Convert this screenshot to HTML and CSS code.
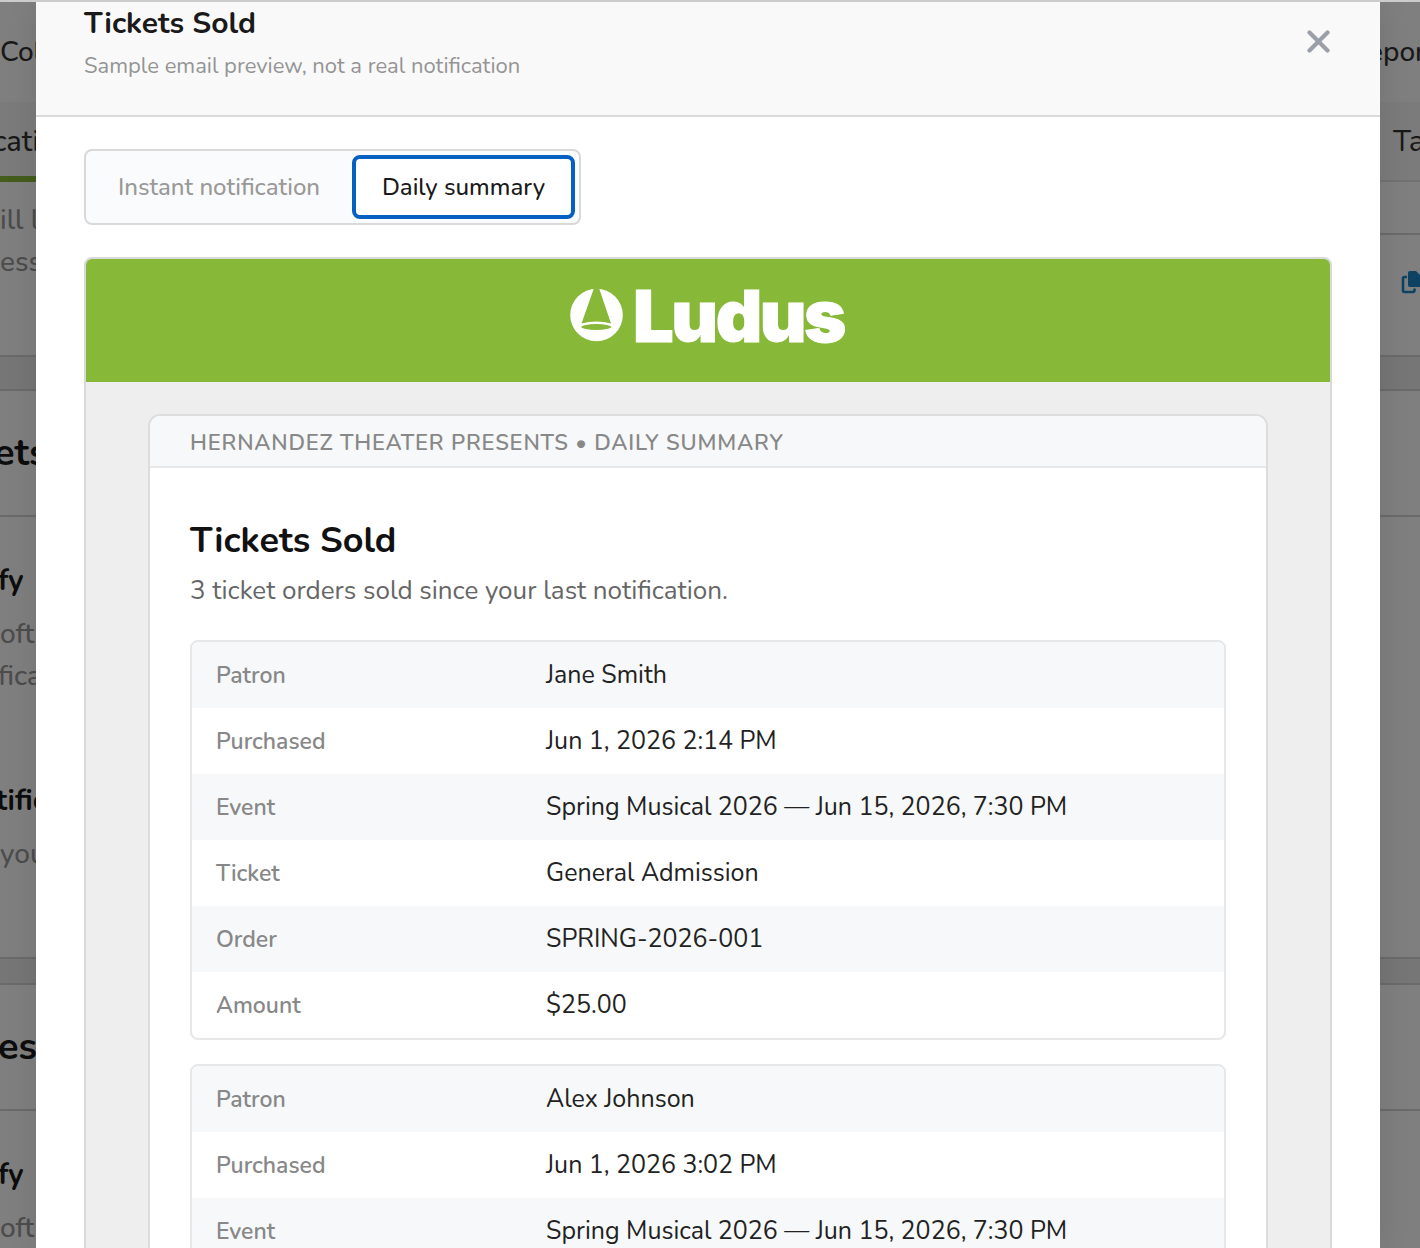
FILE: index.html
```html
<!DOCTYPE html>
<html lang="en">
<head>
  <meta charset="UTF-8">
  <meta name="viewport" content="width=device-width, initial-scale=1.0">
  <title>Tickets Sold - Email Preview</title>
  <link rel="stylesheet" href="styles.css">
</head>
<body>
  <!-- Page behind the modal -->
  <div class="page">
    <div class="nav">
      <span>Col</span>
      <span class="nav-right">epor</span>
    </div>
    <div class="tabs">
      <span class="tab-active">cati</span>
      <span class="tab-right">Ta</span>
    </div>
    <div class="intro">
      <div class="intro-text">
        <p>ill l</p>
        <p>ess</p>
      </div>
      <div class="intro-side">
        <div class="side-top"></div>
        <svg class="copy-icon" width="26" height="24" viewBox="0 0 26 24">
          <path d="M6 6H3.500Q2 6 2 7.500V19.500Q2 21 3.500 21H12Q13.500 21 13.500 19V17.500" fill="none" stroke="#1c84c6" stroke-width="2.600"/>
          <path d="M9 0H15L21 6V14Q21 16 19 16H9Q7 16 7 14V2Q7 0 9 0Z" fill="#1c84c6"/>
        </svg>
      </div>
    </div>
    <div class="card">
      <h2 class="card-title">ets</h2>
      <div class="card-body">
        <h3>fy</h3>
        <p class="indent">oft</p>
        <p>fica</p>
        <h3 class="second">tific</h3>
        <p class="indent">you</p>
      </div>
    </div>
    <div class="card card-next">
      <h2 class="card-title">es</h2>
      <div class="card-body">
        <h3>fy</h3>
        <p class="indent">oft</p>
      </div>
    </div>
  </div>

  <!-- Modal -->
  <div class="overlay">
    <div class="modal">
      <div class="modal-header">
        <div>
          <h1>Tickets Sold</h1>
          <p>Sample email preview, not a real notification</p>
        </div>
        <button class="close" aria-label="Close">
          <svg width="24" height="24" viewBox="0 0 24 24">
            <path d="M2.500 2.500L20.500 20.500M20.500 2.500L2.500 20.500" stroke="#9b9fa8" stroke-width="4.200" stroke-linecap="round"/>
          </svg>
        </button>
      </div>

      <div class="modal-body">
        <div class="toggle">
          <button class="toggle-btn">Instant notification</button>
          <button class="toggle-btn active">Daily summary</button>
        </div>

        <div class="email">
          <div class="email-banner">
            <svg width="280" height="64" viewBox="0 0 280 64">
              <circle cx="28.500" cy="31" r="26.300" fill="#fff"/>
              <path d="M26 4H31L43 39.500Q28.500 35.500 13.500 39.500Z" fill="#88b838"/>
              <ellipse cx="28.300" cy="43" rx="15" ry="2.900" fill="#88b838"/>
              <text class="logo-text" x="65" y="58" textLength="211" lengthAdjust="spacingAndGlyphs">Ludus</text>
            </svg>
          </div>

          <div class="email-card">
            <div class="email-label">HERNANDEZ THEATER PRESENTS • DAILY SUMMARY</div>
            <div class="email-content">
              <h2>Tickets Sold</h2>
              <p>3 ticket orders sold since your last notification.</p>

              <dl class="order">
                <div><dt>Patron</dt><dd>Jane Smith</dd></div>
                <div><dt>Purchased</dt><dd>Jun 1, 2026 2:14 PM</dd></div>
                <div><dt>Event</dt><dd>Spring Musical 2026 — Jun 15, 2026, 7:30 PM</dd></div>
                <div><dt>Ticket</dt><dd>General Admission</dd></div>
                <div><dt>Order</dt><dd>SPRING-2026-001</dd></div>
                <div><dt>Amount</dt><dd>$25.00</dd></div>
              </dl>

              <dl class="order">
                <div><dt>Patron</dt><dd>Alex Johnson</dd></div>
                <div><dt>Purchased</dt><dd>Jun 1, 2026 3:02 PM</dd></div>
                <div><dt>Event</dt><dd>Spring Musical 2026 — Jun 15, 2026, 7:30 PM</dd></div>
              </dl>
            </div>
          </div>
        </div>
      </div>
    </div>
  </div>
</body>
</html>
```
FILE: styles.css
```css
* {
  box-sizing: border-box;
  margin: 0;
  padding: 0;
}
body {
  height: 1248px;
  overflow: hidden;
  position: relative;
  border-top: 2px solid #ccc;
  font-family: Nunito, Lato, sans-serif;
  color: #1a1a1a;
}
button {
  font-family: inherit;
  background: none;
  border: none;
}

/* Page behind the modal */
.page {
  height: 1246px;
  overflow: hidden;
  background-color: #ececec;
  font-size: 28px;
  font-weight: 500;
  white-space: nowrap;
}
.nav {
  display: flex;
  justify-content: space-between;
  height: 100px;
  line-height: 101px;
  background-color: #fff;
  color: #333;
}
.nav-right {
  width: 52px;
}
.tabs {
  display: flex;
  justify-content: space-between;
  height: 80px;
  line-height: 79px;
  font-weight: 400;
  background-color: #f7f7f7;
  border-bottom: 2px solid #e4e4e4;
  color: #333;
}
.tab-active {
  width: 200px;
  height: 80px;
  margin-left: -7px;
  font-size: 29px;
  font-weight: 500;
  border-bottom: 6px solid #88b838;
}
.tab-right {
  width: 27px;
  font-size: 30px;
}
.intro {
  display: flex;
  justify-content: space-between;
  height: 175px;
  background-color: #fff;
  border-bottom: 2px solid #d4d4d4;
}
.intro-text {
  padding-top: 17px;
  line-height: 42px;
  color: #999;
}
.intro-side {
  width: 100px;
}
.side-top {
  height: 53px;
  border-bottom: 2px solid #d4d4d4;
}
.copy-icon {
  display: block;
  margin: 36px 0 0 81px;
}
.card {
  height: 570px;
  margin-top: 32px;
  background-color: #fff;
  border-top: 2px solid #d4d4d4;
  border-bottom: 2px solid #d4d4d4;
}
.card-next {
  margin-top: 24px;
}
.card-title {
  height: 126px;
  margin-left: -6px;
  line-height: 124px;
  font-size: 38px;
  border-bottom: 2px solid #d4d4d4;
}
.card-next .card-title {
  text-indent: 4px;
}
.card-body {
  padding-top: 44px;
}
.card-body h3 {
  margin-left: -2px;
  line-height: 40px;
  font-size: 29px;
}
.card-body p {
  line-height: 42px;
  margin-left: -2px;
  color: #999;
}
.card-body h3 + p {
  margin-top: 12px;
}
.card-body p.indent {
  margin-left: 0;
}
.card-body .second {
  margin-top: 84px;
  margin-left: -4px;
}

/* Modal */
.overlay {
  position: absolute;
  inset: 0;
  padding: 0 40px 0 36px;
  background-color: rgba(0, 0, 0, 0.5);
}
.modal {
  height: 100%;
  overflow: hidden;
  background-color: #fff;
  box-shadow: 0 0 30px rgba(0, 0, 0, 0.1);
}
.modal-header {
  display: flex;
  justify-content: space-between;
  height: 115px;
  padding: 0 49px 0 48px;
  background-color: #f9f9f9;
  border-bottom: 2px solid #dadada;
}
.modal-header h1 {
  padding-top: 2px;
  line-height: 40px;
  font-size: 30px;
}
.modal-header p {
  margin-top: 9px;
  line-height: 27px;
  font-size: 22px;
  color: #949494;
}
.close {
  height: 24px;
  margin-top: 28px;
}
.modal-body {
  padding: 32px 48px;
}

/* Notification toggle */
.toggle {
  display: flex;
  width: 497px;
  height: 76px;
  padding: 4px;
  background-color: #fafbfc;
  border: 2px solid #d9d9d9;
  border-radius: 8px;
}
.toggle-btn {
  width: 262px;
  padding-right: 4px;
  padding-bottom: 1px;
  font-size: 24px;
  font-weight: 500;
  color: #999;
}
.toggle-btn.active {
  width: 223px;
  padding-right: 0;
  color: #1a1a1a;
  background-color: #fff;
  border: 4px solid #0560c2;
  border-radius: 8px;
}

/* Email preview */
.email {
  height: 1100px;
  margin-top: 32px;
  overflow: hidden;
  background-color: #eee;
  border: 2px solid #d9d9d9;
  border-radius: 8px;
}
.email-banner {
  height: 123px;
  padding-top: 25px;
  text-align: center;
  background-color: #88b838;
}
.logo-text {
  font-family: Inter, sans-serif;
  font-size: 72px;
  font-weight: 900;
  letter-spacing: -2.5px;
  fill: #fff;
  stroke: #fff;
  stroke-width: 1px;
}
.email-card {
  margin: 32px 62px 0;
  background-color: #fff;
  border: 2px solid #ddd;
  border-radius: 12px;
  overflow: hidden;
}
.email-label {
  height: 52px;
  padding-left: 40px;
  line-height: 54px;
  font-size: 22px;
  font-weight: 600;
  letter-spacing: 0.8px;
  color: #888;
  background-color: #f6f8f9;
  border-bottom: 2px solid #e5e7e8;
}
.email-content {
  padding: 51px 40px;
}
.email-content h2 {
  line-height: 44px;
  font-size: 36px;
  color: #111;
}
.email-content p {
  margin-top: 10px;
  margin-bottom: 31px;
  line-height: 36px;
  font-size: 26px;
  color: #666;
}

/* Order details */
.order {
  margin-bottom: 24px;
  border: 2px solid #e5e7e8;
  border-radius: 8px;
  overflow: hidden;
}
.order div {
  display: flex;
  align-items: baseline;
  height: 66px;
  padding-left: 24px;
  line-height: 67px;
}
.order div:nth-child(odd) {
  background-color: #f6f8f9;
}
.order dt {
  width: 330px;
  font-size: 23px;
  font-weight: 600;
  color: #888;
}
.order dd {
  font-size: 25px;
  color: #222;
}
```
